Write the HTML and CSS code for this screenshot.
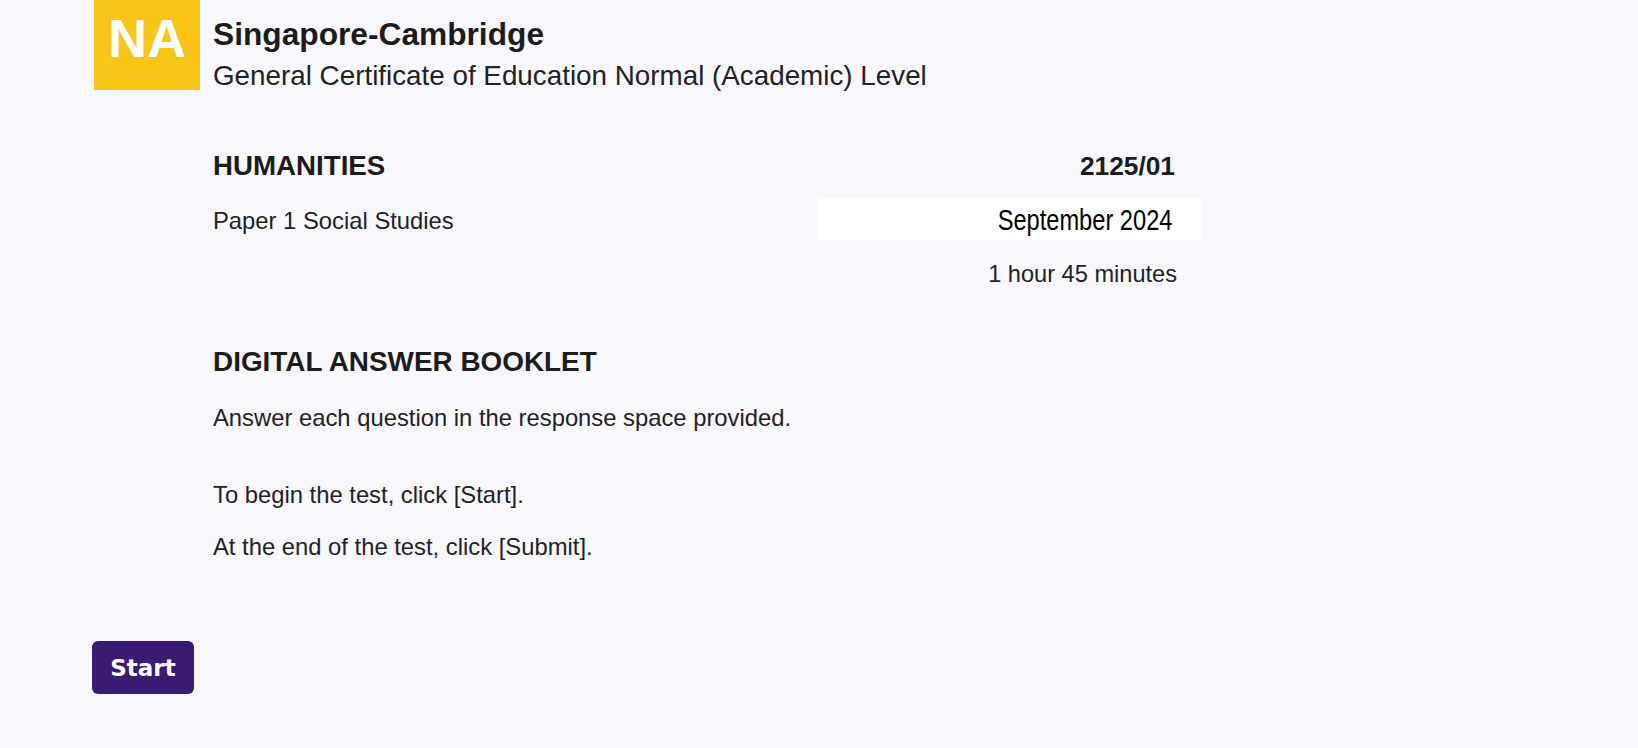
FILE: index.html
```html
<!DOCTYPE html>
<html lang="en">
<head>
<meta charset="utf-8">
<title>Digital Answer Booklet</title>
<link rel="stylesheet" href="styles.css">
</head>
<body>
<div class="page">
  <header class="header">
    <div class="logo">NA</div>
    <div class="titles">
      <div class="title">Singapore-Cambridge</div>
      <div class="subtitle">General Certificate of Education Normal (Academic) Level</div>
    </div>
  </header>
  <main class="content">
    <div class="row row-subject">
      <div class="subject">HUMANITIES</div>
      <div class="code">2125/01</div>
    </div>
    <div class="row row-paper">
      <div class="paper">Paper 1 Social Studies</div>
      <div class="date"><span class="date-text">September 2024</span></div>
    </div>
    <div class="duration">1 hour 45 minutes</div>
    <h2 class="booklet">DIGITAL ANSWER BOOKLET</h2>
    <p class="instr instr-1">Answer each question in the response space provided.</p>
    <p class="instr instr-2">To begin the test, click [Start].</p>
    <p class="instr instr-3">At the end of the test, click [Submit].</p>
  </main>
  <footer class="footer">
    <button class="start" type="button">Start</button>
  </footer>
</div>
</body>
</html>
```

FILE: styles.css
```css
html, body {
  margin: 0;
  padding: 0;
  background: #f8f8fc;
}
body {
  font-family: "Liberation Sans", Arial, sans-serif;
  color: #222226;
}
.page {
  width: 1638px;
  height: 748px;
  overflow: hidden;
}
.header {
  display: flex;
  align-items: flex-start;
  padding-left: 94px;
}
.logo {
  width: 106px;
  height: 90px;
  background: #f9c617;
  color: #ffffff;
  font-weight: bold;
  font-size: 54px;
  line-height: 76px;
  text-align: center;
}
.titles {
  padding-left: 13px;
  padding-top: 16px;
}
.title {
  font-size: 31.7px;
  font-weight: bold;
  line-height: 36px;
  color: #1c1c20;
}
.subtitle {
  margin-top: 6px;
  font-size: 27.8px;
  line-height: 36px;
}
.content {
  margin-left: 213px;
  width: 964px;
}
.row {
  display: flex;
  justify-content: space-between;
}
.row-subject {
  margin-top: 54px;
  align-items: flex-start;
}
.subject, .code {
  font-size: 27.7px;
  font-weight: bold;
  line-height: 36px;
  color: #1c1c20;
}
.code {
  font-size: 26.3px;
  margin-right: 2px;
}
.row-paper {
  margin-top: 14px;
  align-items: center;
}
.paper {
  font-size: 23.8px;
  line-height: 36px;
  padding-top: 4px;
}
.date {
  margin-right: -25px;
  width: 384px;
  height: 42px;
  box-sizing: border-box;
  padding-right: 30px;
  padding-top: 3px;
  background: #ffffff;
  text-align: right;
  font-size: 29px;
  line-height: 39px;
  color: #000000;
}
.date-text {
  display: inline-block;
  transform: scaleX(0.815);
  transform-origin: right center;
}
.duration {
  margin-top: 16px;
  text-align: right;
  font-size: 23.6px;
  line-height: 36px;
}
.booklet {
  margin: 52px 0 0 0;
  font-size: 27.9px;
  font-weight: bold;
  line-height: 36px;
  color: #1c1c20;
}
.instr {
  margin: 0;
  font-size: 23.8px;
  line-height: 36px;
}
.instr-1 { margin-top: 20px; }
.instr-2 { margin-top: 41px; }
.instr-3 { margin-top: 16px; }
.footer {
  padding-left: 92px;
  margin-top: 76px;
}
.start {
  width: 102px;
  height: 53px;
  border: none;
  border-radius: 6px;
  background: #3b1b72;
  color: #ffffff;
  font-family: "DejaVu Sans", Verdana, sans-serif;
  font-weight: bold;
  font-size: 23px;
  padding: 0;
  cursor: pointer;
}
```
